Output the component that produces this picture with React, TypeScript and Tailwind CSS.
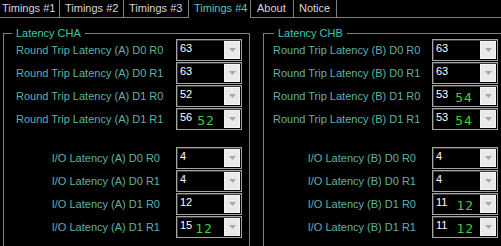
import React from 'react';

type Val = [string, string?];

interface GroupProps {
  title: string;
  ch: string;
  rt: Val[];
  io: Val[];
  box: string;
  legend: string;
  labelCol: string;
  rtPad: string;
  rtGap: string;
  ioGap: string;
}

const keys = ['D0 R0', 'D0 R1', 'D1 R0', 'D1 R1'];

const tabs = [
  { name: 'Timings #1', cls: 'w-[60px] pl-[2px]' },
  { name: 'Timings #2', cls: 'w-[64px] pl-[5px]' },
  { name: 'Timings #3', cls: 'w-[65px] pl-[5px]' },
  { name: 'Timings #4', cls: 'w-[62px] pl-[5px]', active: true },
  { name: 'About', cls: 'w-[43px] pl-[6px]' },
  { name: 'Notice', cls: 'w-[43px] pl-[5px]' },
];

const Combo: React.FC<{ v: Val; gap: string }> = ({ v, gap }) => (
  <div className="w-[66px] h-[22px] flex border border-[#a4a4a4] bg-black shadow-[inset_1px_1px_0_#3a3a3a]">
    <div className="flex-1 flex items-start pl-[3px] pt-[2px]">
      <span className="text-white text-[11px] leading-[13px]">{v[0]}</span>
      {v[1] && (
        <span className={`${gap} mt-[3px] text-[#3fcc3f] text-[13px] leading-[13px] tracking-[1px] font-['DejaVu_Sans_Mono',monospace]`}>
          {v[1]}
        </span>
      )}
    </div>
    <div className="w-[16px] my-[1px] mr-[1px] bg-[#e9e9e9] border border-[#f6f6f6] flex items-center justify-center">
      <svg width="7" height="4" viewBox="0 0 7 4">
        <path d="M0 0h7L3.5 4z" fill="#a8a8a8" />
      </svg>
    </div>
  </div>
);

const Group: React.FC<GroupProps> = ({ title, ch, rt, io, box, legend, labelCol, rtPad, rtGap, ioGap }) => (
  <fieldset className={`${box} h-[240px] shrink-0 min-w-0 border border-[#808080]`}>
    <legend className={`${legend} px-[4px] text-[11px] leading-[12px] text-[#45c6aa]`}>{title}</legend>
    <div className="flex flex-col gap-[1px]">
      {rt.map((v, i) => (
        <div key={i} className="flex items-center h-[22px]">
          <div className={`${labelCol} ${rtPad} text-[#5fb2a5] text-[11px]`}>
            Round Trip Latency ({ch}) {keys[i]}
          </div>
          <Combo v={v} gap={rtGap} />
        </div>
      ))}
    </div>
    <div className="flex flex-col gap-[1px] mt-[17px]">
      {io.map((v, i) => (
        <div key={i} className="flex items-center h-[22px]">
          <div className={`${labelCol} pr-[16px] text-right text-[#5fb2a5] text-[11px]`}>
            I/O Latency ({ch}) {keys[i]}
          </div>
          <Combo v={v} gap={ioGap} />
        </div>
      ))}
    </div>
  </fieldset>
);

export default function App() {
  return (
    <div className="w-[501px] h-[246px] bg-black overflow-hidden font-['Liberation_Sans',Arial,sans-serif] text-[11px]">
      {/* tab strip */}
      <div className="flex h-[18px]">
        {tabs.map((t) =>
          t.active ? (
            <div key={t.name} className={`${t.cls} border-r border-[#808080] text-[#5cc4b0] leading-[17px]`}>
              {t.name}
            </div>
          ) : (
            <div key={t.name} className={`${t.cls} border-r border-b border-[#808080] text-[#d6d6d6] leading-[17px]`}>
              {t.name}
            </div>
          )
        )}
        <div className="flex-1 border-b border-[#808080]" />
      </div>

      <div className="flex mt-[9px]">
        <Group
          title="Latency CHA"
          ch="A"
          rt={[['63'], ['63'], ['52'], ['56', '52']]}
          io={[['4'], ['4'], ['12'], ['15', '12']]}
          box="ml-[3px] w-[247px]"
          legend="ml-[8px]"
          labelCol="w-[172px]"
          rtPad="pl-[12px]"
          rtGap="ml-[5px]"
          ioGap="ml-[3px]"
        />
        <Group
          title="Latency CHB"
          ch="B"
          rt={[['63'], ['63'], ['53', '54'], ['53', '54']]}
          io={[['4'], ['4'], ['11', '12'], ['11', '12']]}
          box="ml-[13px] w-[260px]"
          legend="ml-[10px]"
          labelCol="w-[168px]"
          rtPad="pl-[9px]"
          rtGap="ml-[7px]"
          ioGap="ml-[9px]"
        />
      </div>
    </div>
  );
}
